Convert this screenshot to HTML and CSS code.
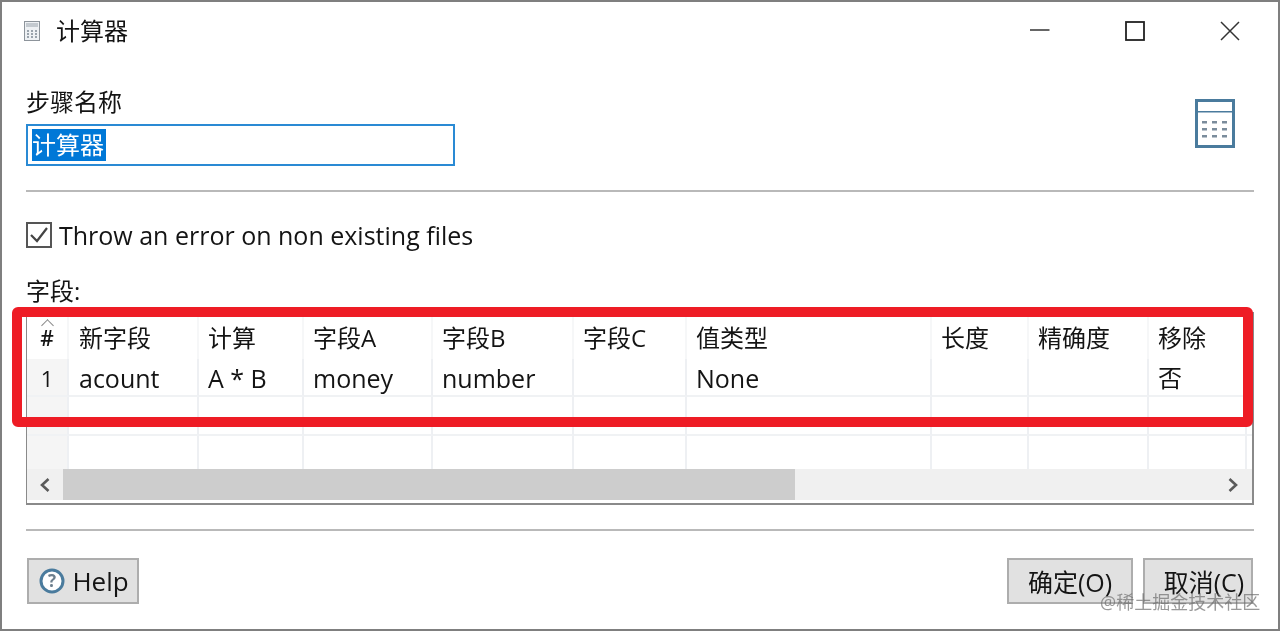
FILE: index.html
```html
<!DOCTYPE html>
<html lang="zh">
<head>
<meta charset="utf-8">
<title>计算器</title>
<link rel="stylesheet" href="styles.css">
</head>
<body>
<div class="window">
  <header class="titlebar">
    <svg class="app-icon" width="16" height="20" viewBox="0 0 16 20">
      <rect x="0.5" y="0.5" width="15" height="19" fill="#eef1f4" stroke="#8d949b"/>
      <rect x="2" y="2" width="12" height="4" fill="#c3c9cf"/>
      <g fill="#9aa3ac">
        <rect x="3" y="9" width="2" height="2"/><rect x="7" y="9" width="2" height="2"/><rect x="11" y="9" width="2" height="2"/>
        <rect x="3" y="12" width="2" height="2"/><rect x="7" y="12" width="2" height="2"/><rect x="11" y="12" width="2" height="2"/>
        <rect x="3" y="15" width="2" height="2"/><rect x="7" y="15" width="2" height="2"/><rect x="11" y="15" width="2" height="2"/>
      </g>
    </svg>
    <span class="title-text">计算器</span>
    <div class="win-controls">
      <svg width="20" height="20" viewBox="0 0 20 20"><path d="M0 9h19.500" stroke="#333" stroke-width="1.500" fill="none"/></svg>
      <svg width="20" height="20" viewBox="0 0 20 20"><rect x="1" y="1" width="18" height="18" stroke="#222" stroke-width="1.800" fill="none"/></svg>
      <svg width="20" height="20" viewBox="0 0 20 20"><path d="M1 1l18 18M19 1L1 19" stroke="#333" stroke-width="1.500" fill="none"/></svg>
    </div>
  </header>

  <main class="content">
    <section class="step-row">
      <div class="step-fields">
        <div class="label">步骤名称</div>
        <div class="name-input"><span class="selected">计算器</span></div>
      </div>
      <svg class="calc-icon" width="40" height="49" viewBox="0 0 40 49">
        <rect x="1.500" y="1.500" width="37" height="46" fill="#fff" stroke="#4a7b9d" stroke-width="3"/>
        <rect x="3" y="12" width="34" height="1.500" fill="#4a7b9d"/>
        <g fill="#7b8c9c">
          <rect x="7" y="22" width="5" height="2.500"/><rect x="17" y="22" width="5" height="2.500"/><rect x="27" y="22" width="5" height="2.500"/>
          <rect x="7" y="29" width="5" height="2.500"/><rect x="17" y="29" width="5" height="2.500"/><rect x="27" y="29" width="5" height="2.500"/>
          <rect x="7" y="36" width="5" height="2.500"/><rect x="17" y="36" width="5" height="2.500"/><rect x="27" y="36" width="5" height="2.500"/>
        </g>
      </svg>
    </section>

    <hr class="rule rule-top">

    <label class="check-row">
      <span class="checkbox">
        <svg width="22" height="22" viewBox="0 0 22 22"><path d="M3 11l6 6L19 4" stroke="#444" stroke-width="2.200" fill="none"/></svg>
      </span>
      <span class="check-text">Throw an error on non existing files</span>
    </label>

    <div class="label fields-label">字段:</div>

    <div class="table-box">
      <div class="grid-row header-row">
        <div class="cell num head-num"><span class="sort-caret"></span>#</div>
        <div class="cell first">新字段</div>
        <div class="cell">计算</div>
        <div class="cell">字段A</div>
        <div class="cell">字段B</div>
        <div class="cell">字段C</div>
        <div class="cell">值类型</div>
        <div class="cell">长度</div>
        <div class="cell">精确度</div>
        <div class="cell">移除</div>
        <div class="cell"></div>
      </div>
      <div class="grid-row data-row">
        <div class="cell num">1</div>
        <div class="cell first latin">acount</div>
        <div class="cell latin">A * B</div>
        <div class="cell latin">money</div>
        <div class="cell latin">number</div>
        <div class="cell"></div>
        <div class="cell latin">None</div>
        <div class="cell"></div>
        <div class="cell"></div>
        <div class="cell">否</div>
        <div class="cell"></div>
      </div>
      <div class="grid-row empty-row">
        <div class="cell num"></div><div class="cell"></div><div class="cell"></div><div class="cell"></div><div class="cell"></div><div class="cell"></div><div class="cell"></div><div class="cell"></div><div class="cell"></div><div class="cell"></div><div class="cell"></div>
      </div>
      <div class="grid-row last-row">
        <div class="cell num"></div><div class="cell"></div><div class="cell"></div><div class="cell"></div><div class="cell"></div><div class="cell"></div><div class="cell"></div><div class="cell"></div><div class="cell"></div><div class="cell"></div><div class="cell"></div>
      </div>
      <div class="scrollbar">
        <span class="arrow">
          <svg width="12" height="16" viewBox="0 0 12 16"><path d="M9.500 2L3 8l6.500 6" stroke="#5a5a5a" stroke-width="2.600" fill="none"/></svg>
        </span>
        <span class="thumb"></span>
        <span class="track"></span>
        <span class="arrow arrow-right">
          <svg width="12" height="16" viewBox="0 0 12 16"><path d="M2.500 2L9 8l-6.500 6" stroke="#5a5a5a" stroke-width="2.600" fill="none"/></svg>
        </span>
      </div>
      <div class="scroll-gap"></div>
    </div>

    <hr class="rule rule-bottom">

    <footer class="buttons">
      <button class="btn btn-help">
        <svg width="26" height="26" viewBox="0 0 26 26">
          <circle cx="13" cy="13" r="11" fill="#fff" stroke="#4a7b9d" stroke-width="3"/>
          <text x="13" y="19" text-anchor="middle" class="q-mark">?</text>
        </svg>
        Help
      </button>
      <div class="btn-group">
        <button class="btn btn-ok">确定(O)</button>
        <button class="btn btn-cancel">取消(C)</button>
      </div>
    </footer>
  </main>

  <div class="red-outline"></div>
  <div class="watermark">@稀土掘金技术社区</div>
</div>
</body>
</html>
```

FILE: styles.css
```css
* { box-sizing: border-box; }
html, body { margin: 0; padding: 0; background: #fff; }
body {
  width: 1280px;
  height: 631px;
  overflow: hidden;
  font-family: "Open Sans", "Noto Sans CJK SC", sans-serif;
  color: #141414;
}
.window {
  position: relative;
  width: 1280px;
  height: 631px;
  border: 2px solid #7f7f7f;
  background: #fff;
  display: flex;
  flex-direction: column;
  filter: blur(0.35px);
}
.titlebar {
  height: 58px;
  display: flex;
  align-items: center;
  padding-left: 22px;
  flex: none;
}
.title-text { margin-left: 16px; font-size: 24px; line-height: 30px; }
.win-controls {
  margin-left: auto;
  margin-right: 38px;
  display: flex;
  gap: 75px;
}
.content {
  padding: 29px 24px 0;
  display: flex;
  flex-direction: column;
}
.step-row { display: flex; justify-content: space-between; height: 77px; }
.label { font-size: 24px; line-height: 26px; }
.name-input {
  margin-top: 9px;
  width: 429px;
  height: 42px;
  border: 2px solid #2a8ad4;
  padding: 3px 4px;
  display: flex;
  align-items: flex-start;
}
.selected {
  background: #0078d7;
  color: #fff;
  font-size: 24px;
  line-height: 32px;
  height: 32px;
  width: 74px;
  display: block;
  white-space: nowrap;
}
.calc-icon { margin-top: 10px; margin-right: 19px; }
.rule { border: 0; height: 2px; margin: 0; background: #b9b9b9; flex: none; }
.rule-top { margin-top: 24px; }
.check-row {
  margin-top: 30px;
  display: flex;
  align-items: center;
  height: 26px;
}
.checkbox {
  width: 26px;
  height: 26px;
  border: 2px solid #555;
  display: flex;
  align-items: center;
  justify-content: center;
  flex: none;
}
.check-text { margin-left: 7px; font-size: 25px; line-height: 26px; white-space: nowrap; }
.fields-label { margin-top: 30px; }
.table-box {
  margin-top: 8px;
  height: 193px;
  border: 1px solid #8a8a8a;
  border-width: 1px 2px 2px 1px;
  display: flex;
  flex-direction: column;
  overflow: hidden;
  flex: none;
}
.grid-row {
  display: grid;
  grid-template-columns: 42px 130px 105px 129px 141px 113px 245px 97px 120px 98px 1fr;
  font-size: 24px;
  flex: none;
}
.cell {
  padding-left: 9px;
  border-right: 2px solid #eef0f3;
  border-bottom: 2px solid #f0f2f4;
  white-space: nowrap;
  line-height: 32px;
}
.cell.first { padding-left: 10px; }
.cell.latin { font-size: 25px; }
.cell:last-child { border-right: 0; }
.header-row { height: 46px; }
.header-row .cell { border-bottom: 0; padding-top: 9px; border-right-color: #f6f7f8; }
.data-row { height: 38px; }
.data-row .cell { padding-top: 3px; }
.empty-row { height: 39px; }
.last-row { height: 33px; }
.last-row .cell { border-bottom: 0; }
.num {
  background: #f5f5f5;
  padding-left: 0;
  text-align: center;
  font-size: 22px;
  border-right-color: #eef0f3;
}
.head-num { position: relative; background: #fff; font-size: 21px; font-weight: 600; padding-top: 9px; }
.sort-caret {
  position: absolute;
  top: 8px;
  left: 16px;
  width: 9px;
  height: 9px;
  border-left: 1px solid #888;
  border-top: 1px solid #888;
  transform: rotate(45deg);
}
.scrollbar {
  display: flex;
  height: 31px;
  background: #f0f0f0;
  flex: none;
}
.arrow { width: 36px; display: flex; align-items: center; justify-content: center; flex: none; }
.arrow-right { padding-right: 2px; }
.thumb { width: 732px; background: #cdcdcd; flex: none; }
.track { flex: 1; }
.scroll-gap { flex: 1; }
.rule-bottom { margin-top: 24px; }
.buttons {
  margin-top: 27px;
  display: flex;
  justify-content: space-between;
  padding-left: 1px;
  padding-right: 1px;
}
.btn {
  height: 46px;
  border: 2px solid #adadad;
  background: #e1e1e1;
  font-family: inherit;
  font-size: 25px;
  color: #141414;
  padding: 0;
  display: flex;
  align-items: center;
  justify-content: center;
}
.btn-help { width: 112px; gap: 7px; font-size: 26px; padding-left: 2px; }
.btn-group { display: flex; gap: 10px; }
.btn-ok { width: 126px; }
.btn-cancel { width: 110px; padding-left: 12px; white-space: nowrap; }
.q-mark { font-family: "Open Sans", sans-serif; font-size: 17px; font-weight: 700; fill: #6d7f8d; }
.red-outline {
  position: absolute;
  left: 10px;
  top: 305px;
  width: 1241px;
  height: 120px;
  border: 10px solid #ee1c25;
  border-radius: 6px;
}
.watermark {
  position: absolute;
  left: 1098px;
  top: 586px;
  font-size: 18px;
  line-height: 28px;
  color: rgba(110, 110, 110, 0.7);
  white-space: nowrap;
}
```
